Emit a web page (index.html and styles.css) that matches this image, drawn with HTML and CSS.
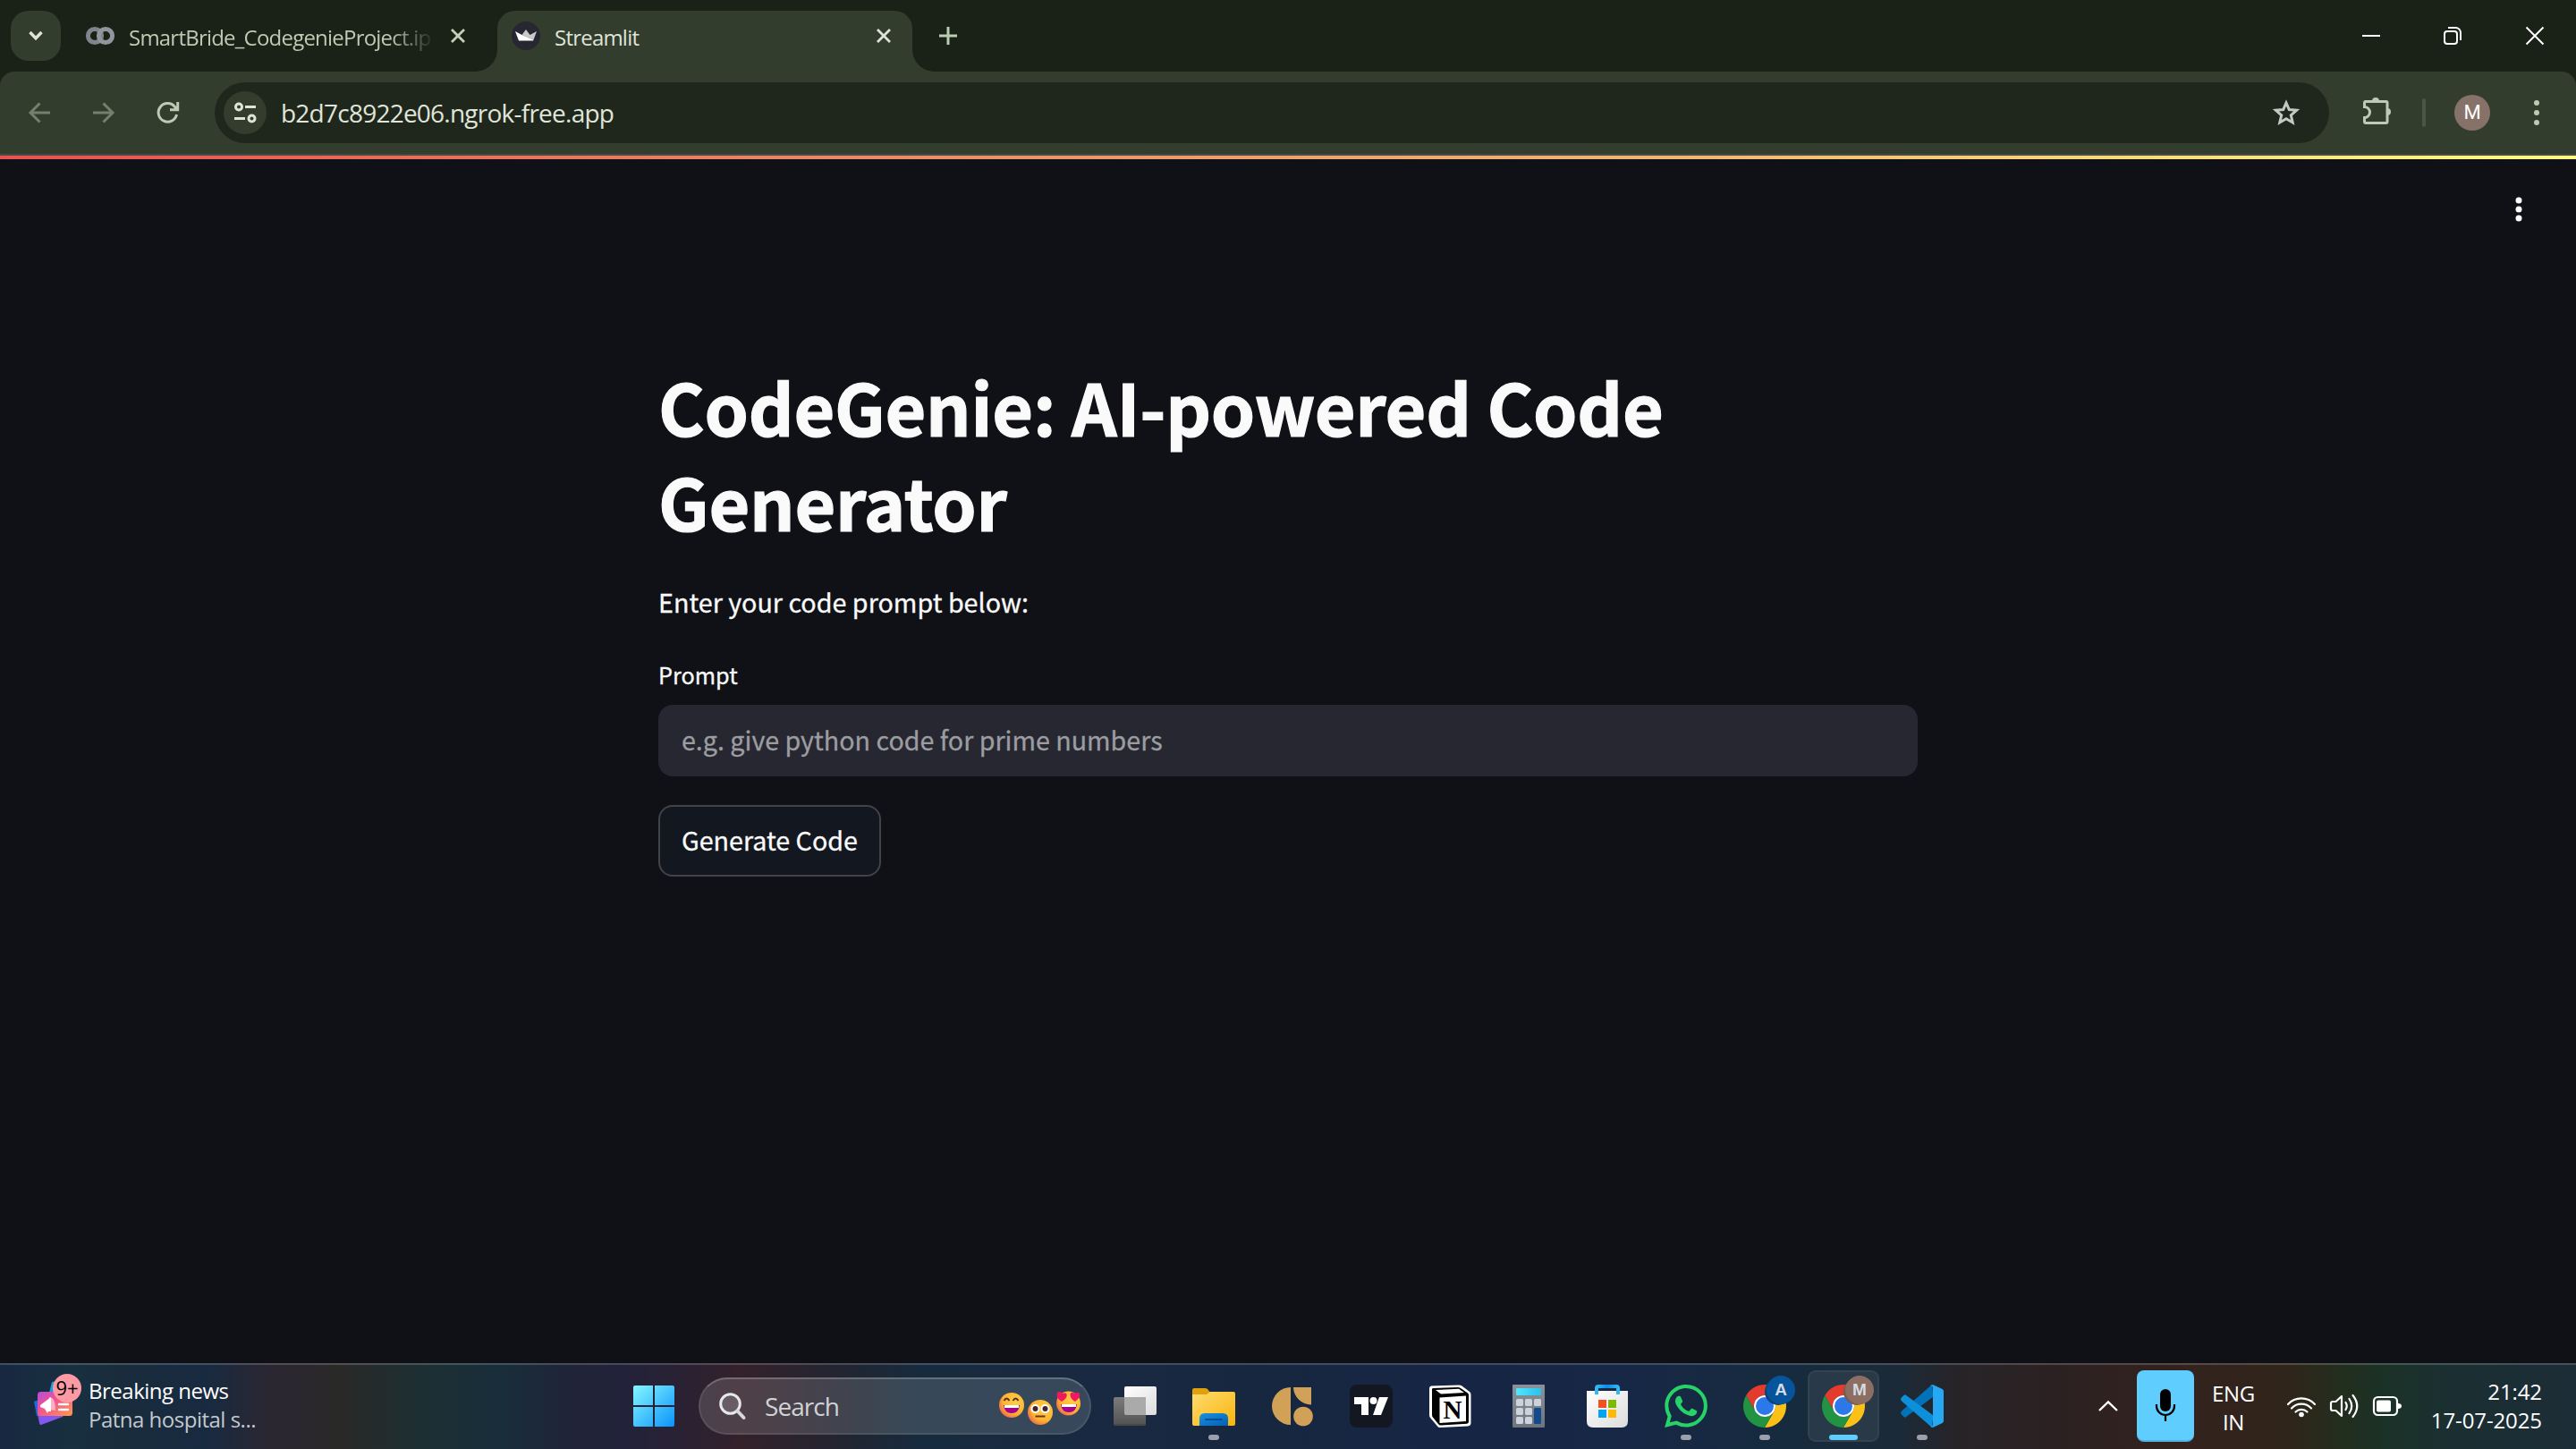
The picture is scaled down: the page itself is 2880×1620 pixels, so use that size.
FILE: index.html
```html
<!DOCTYPE html>
<html lang="en">
<head>
<meta charset="utf-8">
<title>Streamlit</title>
<link rel="stylesheet" href="styles.css">
</head>
<body>
<svg class="defs" width="0" height="0" aria-hidden="true">
  <defs>
    <linearGradient id="win" x1="0" y1="0" x2="1" y2="1"><stop offset="0" stop-color="#85f7ff"/><stop offset="1" stop-color="#0a93fb"/></linearGradient>
    <linearGradient id="folder" x1="0" y1="0" x2="1" y2="1"><stop offset="0" stop-color="#ffdb70"/><stop offset="1" stop-color="#f8b50c"/></linearGradient>
    <linearGradient id="folderTab" x1="0" y1="0" x2="1" y2="1"><stop offset="0" stop-color="#1692e0"/><stop offset="1" stop-color="#0560b4"/></linearGradient>
    <linearGradient id="card" x1="0" y1="0" x2="1" y2="1"><stop offset="0" stop-color="#b44ddb"/><stop offset=".45" stop-color="#f5558c"/><stop offset="1" stop-color="#ff9a4d"/></linearGradient>
    <linearGradient id="sheet" x1="0" y1="0" x2="1" y2="1"><stop offset="0" stop-color="#fff"/><stop offset="1" stop-color="#dcdcdc"/></linearGradient>
    <linearGradient id="shade" x1="0" y1="0" x2="0" y2="1"><stop offset="0" stop-color="#7b7b7b"/><stop offset="1" stop-color="#525252"/></linearGradient>
    <linearGradient id="lcd" x1="0" y1="0" x2="1" y2="0"><stop offset="0" stop-color="#51e6ff"/><stop offset="1" stop-color="#2ac1ec"/></linearGradient>
    <linearGradient id="calc" x1="0" y1="0" x2="0" y2="1"><stop offset="0" stop-color="#8b9198"/><stop offset="1" stop-color="#6d747b"/></linearGradient>
    <linearGradient id="handle" x1="0" y1="0" x2="1" y2="0"><stop offset="0" stop-color="#2fb9f5"/><stop offset=".5" stop-color="#118ae6"/><stop offset="1" stop-color="#2fb9f5"/></linearGradient>
    <radialGradient id="face" cx=".65" cy=".35" r=".75"><stop offset="0" stop-color="#ffd04a"/><stop offset=".65" stop-color="#ffb32e"/><stop offset="1" stop-color="#e9604f"/></radialGradient>
    <g id="chrome">
      <path fill="#e33b2e" d="M24 12H44.780A24 24 0 0 0 3.220 12L13.600 30A12 12 0 0 1 24 12Z"/>
      <path fill="#fbc116" d="M34.400 30 24 48A24 24 0 0 0 44.780 12H24A12 12 0 0 1 34.400 30Z"/>
      <path fill="#229342" d="M13.600 30 3.220 12A24 24 0 0 0 24 48L34.400 30A12 12 0 0 1 13.600 30Z"/>
      <circle cx="24" cy="24" r="12" fill="#fff"/><circle cx="24" cy="24" r="10" fill="#2a78ea"/>
    </g>
  </defs>
</svg>

<header class="tabstrip">
  <button class="tab-search" aria-label="Search tabs"><svg width="20" height="14"><path d="M3.500 3 10 9.700 16.500 3" fill="none" stroke="#dfe4d8" stroke-width="3.400"/></svg></button>
  <div class="tab">
    <svg class="colab" width="32" height="24"><circle cx="10" cy="12" r="7.600"/><circle class="front" cx="22" cy="12" r="7.600"/></svg>
    <span class="tab-title faded">SmartBride_CodegenieProject.ip</span>
    <svg class="tab-close" width="16" height="16"><path d="M1 1 15 15M15 1 1 15"/></svg>
  </div>
  <div class="tab active">
    <svg width="32" height="32"><circle cx="16" cy="16" r="16" fill="#262730"/><path d="M16 9 20.500 15 28 11 24.500 20.500 11.500 15Z" fill="#c9c9cc"/><path d="M11.500 15 24.500 20.500 24 21.500H8L4 11Z" fill="#fff"/></svg>
    <span class="tab-title">Streamlit</span>
    <svg class="tab-close" width="16" height="16"><path d="M1 1 15 15M15 1 1 15"/></svg>
  </div>
  <svg class="new-tab" width="20" height="20"><path d="M10 0V20M0 10H20" stroke="#bccbb3" stroke-width="3"/></svg>
  <div class="window-controls">
    <svg width="20" height="20"><path d="M0 10H20" stroke="#fff" stroke-width="2"/></svg>
    <svg width="20" height="20" fill="none" stroke="#fff" stroke-width="2"><rect x="1" y="5" width="14" height="14" rx="3"/><path d="M5 1H13.500A5.500 5.500 0 0 1 19 6.500V15"/></svg>
    <svg width="20" height="20"><path d="M.5.5 19.500 19.500M19.500.5.5 19.500" stroke="#fff" stroke-width="2"/></svg>
  </div>
</header>

<nav class="toolbar">
  <svg class="nav off" width="24" height="24"><path d="M24 12H2M12.500 1.500 2 12 12.500 22.500"/></svg>
  <svg class="nav off" width="24" height="24"><path d="M0 12H22M11.500 1.500 22 12 11.500 22.500"/></svg>
  <svg class="nav" width="26" height="26"><path d="M22.500 15A10.300 10.300 0 1 1 20.500 6.500L23.500 9.500M23.700 1V9.800H15"/></svg>
  <div class="omnibox">
    <span class="site-info"><svg width="24" height="24" fill="none" stroke="#dfe4d8" stroke-width="3"><circle cx="5" cy="5.500" r="3.500"/><path d="M12 5.500H24M0 18.500H12"/><circle cx="19.500" cy="18.500" r="3.500"/></svg></span>
    <span class="url">b2d7c8922e06.ngrok-free.app</span>
    <svg class="star" width="32" height="30"><path d="M16 4 19.300 11.600 27.600 12.300 21.300 17.800 23.200 26 16 21.700 8.800 26 10.700 17.800 4.400 12.300 12.700 11.600Z" fill="none" stroke="#c6c8c3" stroke-width="3"/></svg>
  </div>
  <svg class="puzzle" width="34" height="34"><path d="M3.500 6.500H27.500Q29 6.500 29 8V29Q29 30.500 27.500 30.500H5Q3.500 30.500 3.500 29V24.500A6 6 0 0 0 3.500 12.500V8Q3.500 6.500 5 6.500Z" fill="none" stroke="#bdcbb4" stroke-width="3"/><path d="M12 6A4 4 0 0 1 20 6ZM29 14A4 4 0 0 1 29 22Z" fill="#bdcbb4"/></svg>
  <span class="divider"></span>
  <span class="avatar">M</span>
  <svg class="menu" width="6" height="28" fill="#bdcbb4"><circle cx="3" cy="3" r="3"/><circle cx="3" cy="14" r="3"/><circle cx="3" cy="25" r="3"/></svg>
</nav>

<main class="page">
  <div class="page-menu"><svg width="8" height="28" fill="#fff"><circle cx="4" cy="4" r="3.500"/><circle cx="4" cy="14" r="3.500"/><circle cx="4" cy="24" r="3.500"/></svg></div>
  <div class="content">
    <h1>CodeGenie: AI-powered Code Generator</h1>
    <p class="lead">Enter your code prompt below:</p>
    <div class="label">Prompt</div>
    <div class="field">e.g. give python code for prime numbers</div>
    <button class="generate">Generate Code</button>
  </div>
</main>

<footer class="taskbar">
  <div class="widgets">
    <div class="news">
      <svg width="56" height="60"><path d="M0 24 5 22V40H3Z" fill="#2d63d8"/><path d="M20 2 30 0V14H17Z" fill="#1d9be0"/><path d="M4 38 34 38 32 41 8 50Q6 50 6 48Z" fill="#8458ef"/><rect x="4" y="13" width="39" height="27" rx="3.500" fill="url(#card)"/><path d="M17 19Q24 19 24 34L17 33Z" fill="#ffb0c6"/><path d="M19 19V35H16L15 37 12 32 7 30V28Z" fill="#fff"/><path d="M28 27H38M28 33H38" stroke="#fff" stroke-width="2.400" stroke-linecap="round"/></svg>
      <span class="badge">9+</span>
    </div>
    <div class="news-text"><span>Breaking news</span><span class="sub">Patna hospital s...</span></div>
  </div>
  <div class="apps">
    <div class="slot"><svg width="46" height="46" fill="url(#win)"><path d="M2 0H22V22H0V2Q0 0 2 0ZM24 0H44Q46 0 46 2V22H24ZM0 24H22V46H2Q0 46 0 44ZM24 24H46V44Q46 46 44 46H24Z"/></svg></div>
    <div class="search">
      <svg width="30" height="30" fill="none"><circle cx="12.500" cy="12.500" r="10.800" stroke="#e6e8ea" stroke-width="3" fill="#ffffff26"/><path d="M20.500 20.500 27.500 28" stroke="#d5d8dc" stroke-width="4" stroke-linecap="round"/></svg>
      <span class="search-text">Search</span>
      <svg class="emojis" width="92" height="40">
        <circle cx="14" cy="15" r="14" fill="url(#face)"/><path d="M5.500 10Q8.500 5 11.500 10M15.500 10Q18.500 5 21.500 10" fill="none" stroke="#5b2e25" stroke-width="2"/><path d="M5 15H23Q22 24 14 24T5 15Z" fill="#a2008d"/><path d="M6 15H22V18H6Z" fill="#fff"/>
        <circle cx="46" cy="23" r="14" fill="url(#face)"/><circle cx="40.500" cy="19" r="5" fill="#fff"/><circle cx="51.500" cy="19" r="5" fill="#fff"/><circle cx="40.500" cy="19" r="3" fill="#432331"/><circle cx="51.500" cy="19" r="3" fill="#432331"/><path d="M40.500 27.500H51.500" stroke="#6a3527" stroke-width="2"/>
        <circle cx="77.500" cy="13" r="13.500" fill="url(#face)"/><path d="M70 11C62 6 64-1 68 0 70 0 71 2 71 2 76-1 79 6 70 11ZM85 11C77 6 79-1 83 1L85 2C90-2 94 5 85 11Z" fill="#f2185f"/><path d="M69 14H87Q86 23 78 23T69 14Z" fill="#a2008d"/><path d="M70 14H86V17H70Z" fill="#fff"/>
      </svg>
    </div>
    <div class="slot first"><svg width="48" height="48"><rect x="12" y="2" width="36" height="32" rx="2" fill="url(#sheet)"/><rect y="14" width="36" height="32" rx="2" fill="url(#shade)"/><path d="M12 14H36V34H14Q12 34 12 32Z" fill="#aaa"/><path d="M0 44H36Q36 46 34 46H2Q0 46 0 44Z" fill="#484848"/></svg></div>
    <div class="slot open"><svg width="48" height="48"><path d="M0 6Q0 4 2 4H14Q16 4 17 5L22 11H0Z" fill="#dfa10c"/><path d="M0 11H16L20 8H46Q48 8 48 10V44Q48 46 46 46H2Q0 46 0 44Z" fill="url(#folder)"/><path d="M8 46V38Q8 32 14 32H34Q40 32 40 38V46Z" fill="url(#folderTab)"/><path d="M15 39H33" stroke="#0a4d94" stroke-width="2" stroke-linecap="round"/></svg></div>
    <div class="slot"><svg width="46" height="48" fill="#d2a158"><path d="M21 3V45A21 21 0 0 1 21 3ZM24 3H44V22.500A20 20 0 0 1 24 3Z"/><circle cx="35" cy="35.500" r="10.800"/></svg></div>
    <div class="slot"><svg width="48" height="48"><rect width="48" height="48" rx="8" fill="#131722"/><path d="M5 14H21V34H13V22H5ZM33 14H43L35 34H26Z" fill="#fff"/><circle cx="26.500" cy="18" r="4" fill="#fff"/></svg></div>
    <div class="slot"><svg width="48" height="48"><path d="M3 1.500 34 .5Q36 .5 37.500 1.500L46 8Q47.500 9 47.500 11V43Q47.500 46 44 46.500L13 48Q11 48 10 46.500L2 37Q1 36 1 34V4Q1 2 3 1.500Z" fill="#fff"/><path d="M5 4 33 3Q34.500 3 36 4L44 9.500Q45 10 45 12V41.500Q45 43.500 43 43.700L14 45.500Q12 45.500 11 44L4.500 36Q4 35 4 34V5.500Q4 4 5 4Z" fill="#000"/><path d="M8 6 34 4.800 40 9 14 10.500ZM12.500 14.500 42 12.500V41L12.500 43Z" fill="#fff"/><text x="27" y="37.500" text-anchor="middle" font-family="Liberation Serif, serif" font-weight="bold" font-size="29">N</text></svg></div>
    <div class="slot"><svg width="36" height="48"><rect width="36" height="48" rx="1" fill="url(#calc)"/><rect x="4" y="4" width="28" height="8" rx="1" fill="url(#lcd)"/><g fill="#ccd3da"><rect x="4" y="16" width="8" height="8" rx="1.500"/><rect x="14" y="16" width="8" height="8" rx="1.500"/><rect x="24" y="16" width="8" height="8" rx="1.500"/><rect x="4" y="26" width="8" height="8" rx="1.500"/><rect x="14" y="26" width="8" height="8" rx="1.500"/><rect x="4" y="36" width="8" height="8" rx="1.500"/><rect x="14" y="36" width="8" height="8" rx="1.500"/></g><rect x="24" y="26" width="8" height="18" rx="1.500" fill="#134a8c"/></svg></div>
    <div class="slot"><svg width="46" height="48"><path d="M0 7H46V41Q46 48 39 48H7Q0 48 0 41Z" fill="url(#sheet)"/><path d="M11 11V4Q11 2 13 2H33Q35 2 35 4V11" fill="none" stroke="url(#handle)" stroke-width="4"/><path d="M13 17H22V26H13Z" fill="#f25022"/><path d="M24 17H33V26H24Z" fill="#7fba00"/><path d="M13 28H22V37H13Z" fill="#00a4ef"/><path d="M24 28H33V37H24Z" fill="#ffb900"/></svg></div>
    <div class="slot open"><svg width="48" height="48" viewBox="0 0 24 24"><path fill="#25d366" d="M17.472 14.382c-.297-.149-1.758-.867-2.030-.967-.273-.099-.471-.148-.670.150-.197.297-.767.966-.940 1.164-.173.199-.347.223-.644.075-.297-.150-1.255-.463-2.390-1.475-.883-.788-1.480-1.761-1.653-2.059-.173-.297-.018-.458.130-.606.134-.133.298-.347.446-.520.149-.174.198-.298.298-.497.099-.198.050-.371-.025-.520-.075-.149-.669-1.612-.916-2.207-.242-.579-.487-.500-.669-.510-.173-.008-.371-.010-.570-.010-.198 0-.520.074-.792.372-.272.297-1.040 1.016-1.040 2.479 0 1.462 1.065 2.875 1.213 3.074.149.198 2.096 3.200 5.077 4.487.709.306 1.262.489 1.694.625.712.227 1.360.195 1.871.118.571-.085 1.758-.719 2.006-1.413.248-.694.248-1.289.173-1.413-.074-.124-.272-.198-.570-.347m-5.421 7.403h-.004a9.870 9.870 0 0 1-5.031-1.378l-.361-.214-3.741.982.998-3.648-.235-.374a9.860 9.860 0 0 1-1.510-5.260c.001-5.450 4.436-9.884 9.888-9.884 2.640 0 5.122 1.030 6.988 2.898a9.825 9.825 0 0 1 2.893 6.994c-.003 5.450-4.437 9.884-9.885 9.884m8.413-18.297A11.815 11.815 0 0 0 12.050 0C5.495 0 .160 5.335.157 11.892c0 2.096.547 4.142 1.588 5.945L.057 24l6.305-1.654a11.882 11.882 0 0 0 5.683 1.448h.005c6.554 0 11.890-5.335 11.893-11.893a11.821 11.821 0 0 0-3.480-8.413z"/></svg></div>
    <div class="slot open"><svg width="48" height="48"><use href="#chrome"/></svg><span class="profile blue">A</span></div>
    <div class="slot open current"><svg width="48" height="48"><use href="#chrome"/></svg><span class="profile brown">M</span></div>
    <div class="slot open"><svg width="48" height="48"><path d="M.8 29.800 35 0 36.500 13.500 5.500 36.500Q4.500 37 3.500 36L.8 33.500Q-.8 32 .8 29.800Z" fill="#0072b8"/><path d="M.8 18.200 35 48 36.500 34.500 5.500 11.500Q4.500 11 3.500 12L.8 14.500Q-.8 16 .8 18.200Z" fill="#0d8fd9"/><path d="M37 .5 46.500 5Q48 5.800 48 7.500V40.500Q48 42.200 46.500 43L37 47.500Q34.500 48.500 33 46.500 36 47.500 36 44V4Q36 .5 33 1.500 34.500-.5 37 .5Z" fill="#27a8f2"/></svg></div>
  </div>
  <div class="tray">
    <svg width="22" height="12"><path d="M1 11 11 1.500 21 11" fill="none" stroke="#fff" stroke-width="2.400"/></svg>
    <div class="mic"><svg width="24" height="36"><rect x="6" y="0" width="12" height="25" rx="6"/><path d="M2 17V19A10 10 0 0 0 22 19V17M12 29V36" fill="none" stroke="#000" stroke-width="2.200"/></svg></div>
    <div class="lang"><span>ENG</span><span>IN</span></div>
    <svg class="wifi" width="32" height="26" fill="none" stroke="#fff" stroke-width="2.200"><path d="M1 11A20.500 20.500 0 0 1 31 11M5 15.500A15 15 0 0 1 27 15.500M9.500 19.500A9.500 9.500 0 0 1 22.500 19.500" stroke-linecap="round"/><circle cx="16" cy="22.500" r="2.800" fill="#fff" stroke="none"/></svg>
    <svg class="speaker" width="32" height="28" fill="none" stroke="#fff" stroke-width="2.200" stroke-linejoin="round" stroke-linecap="round"><path d="M13 3V25L6.500 19H3Q1 19 1 17V11Q1 9 3 9H6.500ZM17.500 10Q20 14 17.500 18M21.500 6Q27 14 21.500 22M25.500 2Q35 14 25.500 26"/></svg>
    <svg class="battery" width="32" height="22"><rect x="1" y="1" width="26" height="20" rx="4.500" fill="none" stroke="#fff" stroke-width="2.200"/><rect x="4" y="4.500" width="16" height="13" rx="2" fill="#fff"/><path d="M28 8Q32 8 32 11T28 14Z" fill="#fff"/></svg>
    <div class="clock"><span>21:42</span><span>17-07-2025</span></div>
  </div>
</footer>
</body>
</html>
```
FILE: styles.css
```css
*, *::before, *::after { box-sizing: border-box; }
body {
  margin: 0;
  width: 2880px;
  height: 1620px;
  display: flex;
  flex-direction: column;
  overflow: hidden;
  background: #1a2217;
  font-family: "Open Sans", "Noto Sans", sans-serif;
  font-size: 24px;
}
svg { display: block; flex: none; overflow: visible; }
.defs { position: absolute; }
button { font: inherit; border: 0; padding: 0; margin: 0; }
span { white-space: nowrap; }

/* Tab strip */
.tabstrip { height: 80px; flex: none; display: flex; align-items: center; padding-left: 12px; }
.tab-search { width: 56px; height: 56px; border-radius: 20px; background: #333d2e; display: grid; place-items: center; }
.tab { height: 68px; margin-top: 12px; padding-bottom: 12px; display: flex; align-items: center; color: #bccbb3; }
.tab:not(.active) { width: 488px; padding-left: 28px; }
.colab { fill: none; stroke: #7f858b; stroke-width: 5; }
.colab .front { stroke: #91969c; }
.tab-title { margin-left: 16px; letter-spacing: -.78px; position: relative; top: 1px; }
.faded { width: 344px; overflow: hidden; -webkit-mask-image: linear-gradient(90deg, #000 292px, transparent 342px); mask-image: linear-gradient(90deg, #000 292px, transparent 342px); }
.tab-close { fill: none; stroke: #c2cfb9; stroke-width: 2.8; }
.tab:not(.active) .tab-close { margin-left: 16px; }
.active { position: relative; width: 464px; padding-left: 16px; padding-right: 24px; border-radius: 20px 20px 0 0; background: #333d2e; color: #dfe4d8; }
.active .tab-close { margin-left: auto; stroke: #dfe4d8; }
.active::before, .active::after { content: ""; position: absolute; bottom: 0; width: 24px; height: 24px; }
.active::before { right: 100%; background: radial-gradient(circle at 0 0, transparent 23.5px, #333d2e 24px); }
.active::after { left: 100%; background: radial-gradient(circle at 100% 0, transparent 23.5px, #333d2e 24px); }
.new-tab { margin-left: 30px; }
.window-controls { margin-left: auto; padding-right: 36px; display: flex; gap: 72px; }
.window-controls svg:first-child { margin-right: -1px; }

/* Toolbar */
.toolbar { height: 94px; flex: none; display: flex; align-items: center; padding: 0 41px 0 32px; background: #333d2e; border-radius: 16px 16px 0 0; border-bottom: 2px solid #474a45; }
.nav { fill: none; stroke: #bdcbb4; stroke-width: 3; margin-right: 48px; }
.nav.off { stroke: #747f6c; }
.toolbar .nav:nth-child(3) { margin: 0 39px 0 -1px; }
.omnibox { width: 2364px; height: 68px; border-radius: 34px; background: #1f271c; display: flex; align-items: center; padding: 0 32px 0 10px; }
.site-info { width: 48px; height: 48px; border-radius: 50%; background: #333d2e; display: grid; place-items: center; }
.url { margin-left: 16px; font-size: 28px; letter-spacing: -.76px; color: #e0e5da; }
.star { margin-left: auto; }
.puzzle { margin-left: 36px; margin-top: -4px; }
.divider { width: 4px; height: 32px; border-radius: 2px; background: #4b5745; margin-left: 34px; }
.avatar { width: 40px; height: 40px; border-radius: 50%; background: #87726a; color: #fff; margin-left: 32px; font: 22px/40px Roboto, sans-serif; text-align: center; }
.menu { margin-left: auto; }

/* Streamlit page */
.page { flex: 1; background: #0f1116; font-family: "Noto Sans CJK JP", "Noto Sans CJK SC", sans-serif; color: #fafafa; }
.page::before { content: ""; display: block; height: 4px; background: linear-gradient(90deg, #e8514f 0%, #e98a66 33%, #f0b873 66%, #fffd80 100%); }
.page-menu { display: flex; justify-content: flex-end; padding: 42px 60px 0 0; height: 70px; }
.content { width: 1408px; margin: 153px auto 0; }
h1 { margin: 0; font-size: 79px; line-height: 106px; font-weight: 700; letter-spacing: -.25px; -webkit-text-stroke: 1.2px #fafafa; }
.lead { margin: 34px 0 0; font-size: 28.700px; line-height: 52px; -webkit-text-stroke: .3px; }
.label { margin-top: 35px; font-size: 25.200px; line-height: 40px; -webkit-text-stroke: .3px; }
.field { margin-top: 14px; height: 80px; border-radius: 16px; background: #262730; padding: 0 26px; font-size: 28.650px; line-height: 78px; color: #9c9da1; -webkit-text-stroke: .3px; }
.generate { display: block; margin-top: 32px; width: 249px; height: 80px; border: 2px solid #414349; border-radius: 16px; background: #131720; color: #fafafa; padding: 0 0 3px 24px; text-align: left; font-size: 28.650px; line-height: 70px; -webkit-text-stroke: .3px; }

/* Taskbar */
.taskbar {
  height: 96px; flex: none; display: flex; color: #fff; border-top: 2px solid #ffffff2e;
  background-image: linear-gradient(90deg, #172840 0, #183040 80px, #192c3c 130px, #182a40 230px, #2a2632 300px, #2a2928 380px, #1c3034 480px, #182d3a 560px, #202438 640px, #22223a 700px, #2e2130 790px, #34212a 830px, #1f2633 960px, #172b3e 1030px, #182941 1250px, #17273f 1400px, #172545 1650px, #172746 1800px, #162b3e 2000px, #1b2a38 2120px, #272428 2190px, #2c2122 2300px, #33221d 2450px, #2f251a 2560px, #222e1e 2620px, #1b3228 2670px, #1b2f33 2750px, #1c2c36 2880px);
}
.widgets { width: 687px; display: flex; padding: 13px 0 0 38px; }
.news { position: relative; width: 61px; padding-top: 4px; }
.badge { position: absolute; left: 21px; top: -3px; width: 32px; height: 32px; border-radius: 50%; background: #ff99a4; color: #000; font-size: 22px; line-height: 31px; text-align: center; }
.news-text, .clock, .lang { display: flex; flex-direction: column; line-height: 32px; }
.news-text { letter-spacing: -.5px; }
.sub { color: #c4c9ce; }
.apps { display: flex; align-items: center; padding-bottom: 2px; }
.slot { position: relative; width: 88px; height: 80px; display: grid; place-items: center; }
.slot.first { margin-left: 5px; }
.open::after { content: ""; position: absolute; bottom: 2px; left: 38px; width: 12px; height: 6px; border-radius: 3px; background: #9a9fab; }
.current::before { content: ""; position: absolute; left: 4px; top: 0; width: 80px; height: 80px; border-radius: 9px; background: #ffffff12; border: 2px solid #ffffff0d; }
.current svg { position: relative; }
.open.current::after { left: 28px; width: 32px; background: #60cdff; }
.profile { position: absolute; left: 46px; top: 6px; width: 32px; height: 32px; border-radius: 50%; font: bold 19px/32px "Liberation Sans", sans-serif; text-align: center; color: #d5dbe2; }
.blue { background: #06549c; box-shadow: -3px 2px 0 -1px #0b427c; }
.brown { background: #8c6e63; box-shadow: -3px 2px 0 -1px #765c54; }
.search { width: 439px; height: 64px; margin-left: 6px; border-radius: 32px; background: #ffffff24; border: 2px solid #ffffff16; border-top-color: #ffffff38; display: flex; align-items: center; padding: 0 9px 0 21px; }
.search-text { margin-left: 21px; font-size: 28px; letter-spacing: -.95px; color: #d0d3d6; }
.emojis { margin-left: auto; margin-top: 8px; }
.tray { margin-left: auto; display: flex; align-items: center; padding: 0 38px 2px 0; }
.mic { width: 64px; height: 80px; margin-left: 21px; border-radius: 8px; background: #60cdff; border-bottom: 2px solid #54b0dc; display: grid; place-items: center; }
.lang { width: 46px; margin-left: 21px; padding-top: 3px; align-items: center; letter-spacing: -.3px; }
.wifi { margin-left: 37px; }
.speaker { margin-left: 16px; }
.battery { margin-left: 16px; }
.clock { margin-left: 33px; width: 124px; align-items: flex-end; letter-spacing: -.1px; }
```
